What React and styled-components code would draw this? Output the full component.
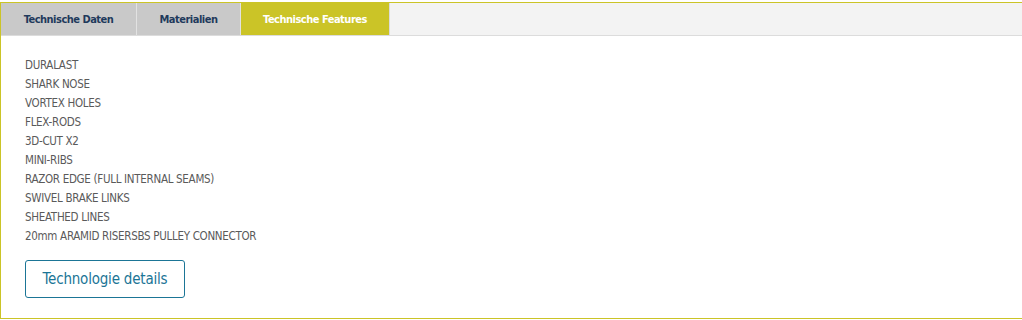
import React, { useState } from 'react';
import styled, { createGlobalStyle } from 'styled-components';

const GlobalStyle = createGlobalStyle`
  html, body {
    margin: 0;
    padding: 0;
    background: #ffffff;
    overflow: hidden;
  }
  body {
    font-family: "DejaVu Sans Condensed", "Liberation Sans", sans-serif;
  }
`;

const Panel = styled.div`
  margin-top: 2px;
  width: 1040px;
  height: 317px;
  box-sizing: border-box;
  border: 1px solid #cbc427;
  background: #ffffff;
`;

const TabBar = styled.div`
  display: flex;
  height: 32px;
  background: #f3f3f3;
  border-bottom: 1px solid #dcdcdc;
`;

const Tab = styled.button`
  width: ${(p) => p.$w}px;
  height: 32px;
  border: none;
  border-right: 1px solid ${(p) => (p.$active ? '#dcdcdc' : '#e2e2e2')};
  padding: 0;
  margin: 0;
  background: ${(p) => (p.$active ? '#cbc427' : '#c9c9c9')};
  color: ${(p) => (p.$active ? '#ffffff' : '#1f3a5c')};
  font-family: inherit;
  font-size: 11px;
  letter-spacing: -0.5px;
  font-weight: bold;
  cursor: pointer;
`;

const Content = styled.div`
  padding: 20px 24px 0;
`;

const FeatureList = styled.ul`
  list-style: none;
  margin: 0;
  padding: 0;
`;

const Feature = styled.li`
  height: 19px;
  line-height: 19px;
  font-size: 11.5px;
  letter-spacing: -0.3px;
  color: #5a5a5a;
`;

const DetailsButton = styled.button`
  margin-top: 14px;
  width: 160px;
  height: 38px;
  border: 1px solid #1b7596;
  border-radius: 3px;
  background: #ffffff;
  color: #1b7596;
  font-family: inherit;
  font-size: 15px;
  letter-spacing: -0.2px;
  cursor: pointer;
`;

const tabs = [
  { label: 'Technische Daten', w: 136 },
  { label: 'Materialien', w: 104 },
  { label: 'Technische Features', w: 149 },
];

const features = [
  'DURALAST',
  'SHARK NOSE',
  'VORTEX HOLES',
  'FLEX-RODS',
  '3D-CUT X2',
  'MINI-RIBS',
  'RAZOR EDGE (FULL INTERNAL SEAMS)',
  'SWIVEL BRAKE LINKS',
  'SHEATHED LINES',
  '20mm ARAMID RISERSBS PULLEY CONNECTOR',
];

export default function App() {
  const [active, setActive] = useState(2);

  return (
    <>
      <GlobalStyle />
      <Panel>
        <TabBar>
          {tabs.map((t, i) => (
            <Tab key={t.label} $w={t.w} $active={i === active} onClick={() => setActive(i)}>
              {t.label}
            </Tab>
          ))}
        </TabBar>
        <Content>
          <FeatureList>
            {features.map((f) => (
              <Feature key={f}>{f}</Feature>
            ))}
          </FeatureList>
          <DetailsButton>Technologie details</DetailsButton>
        </Content>
      </Panel>
    </>
  );
}
